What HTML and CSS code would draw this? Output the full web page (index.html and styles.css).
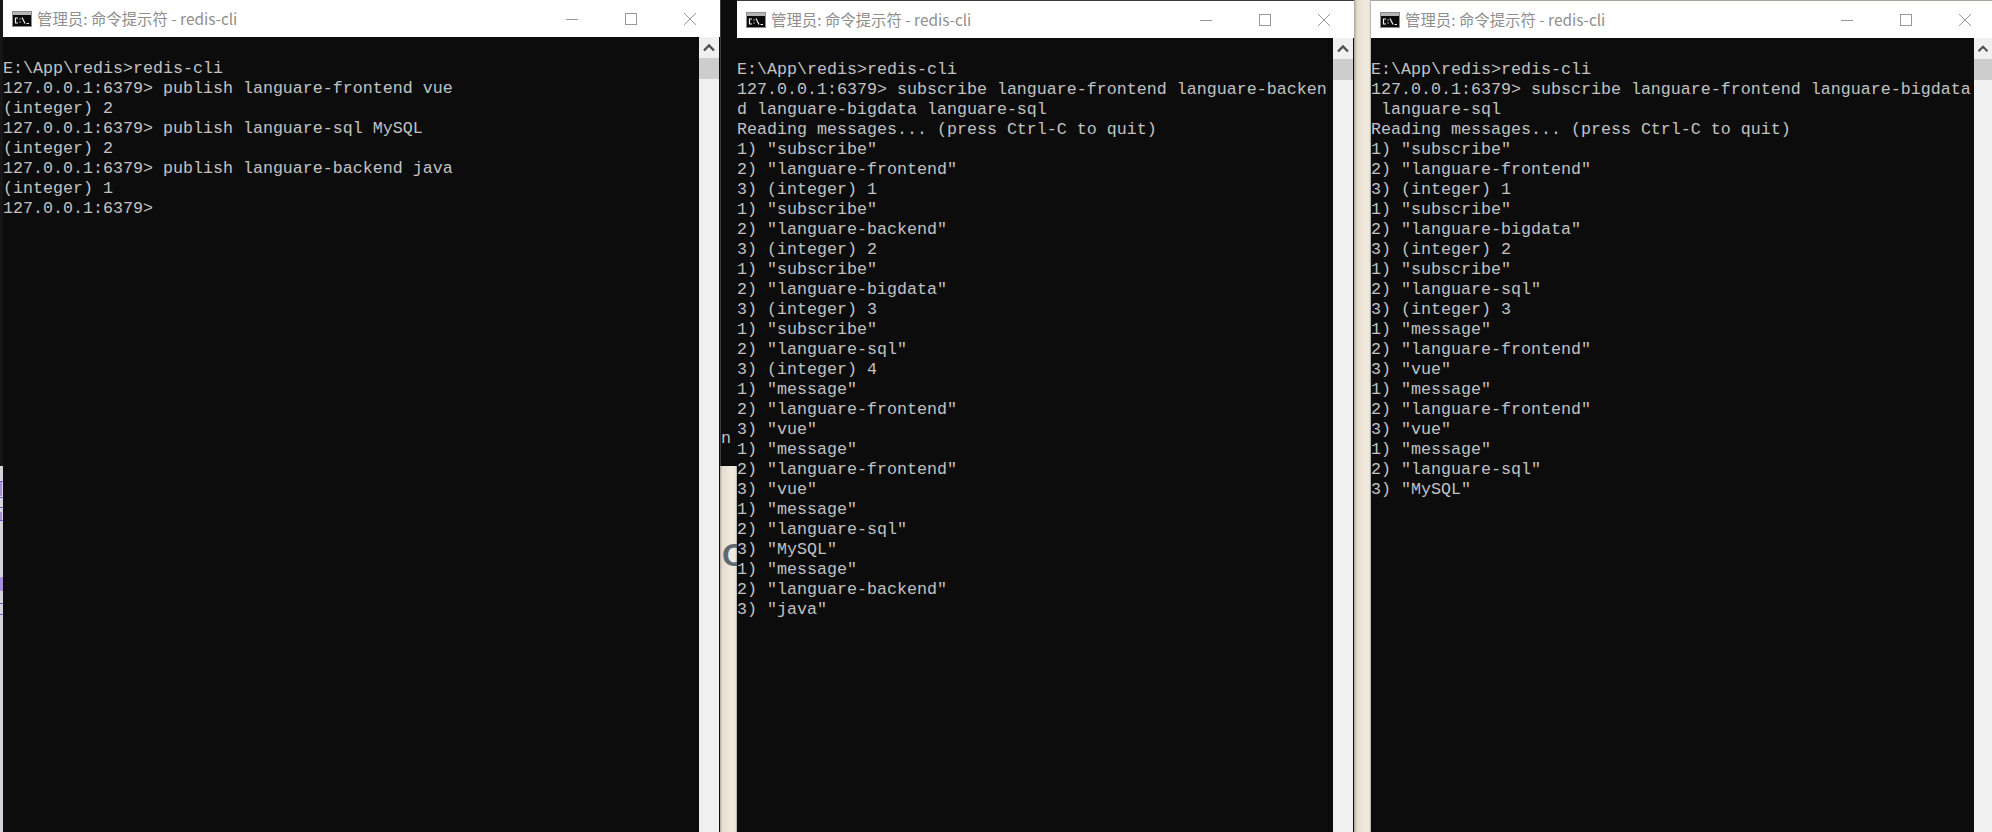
FILE: index.html
```html
<!DOCTYPE html>
<html lang="zh">
<head>
<meta charset="utf-8">
<title>redis-cli</title>
<link rel="stylesheet" href="styles.css">
</head>
<body>
<svg class="defs" width="0" height="0" aria-hidden="true">
  <symbol id="cmd" viewBox="0 0 20 16">
    <rect width="20" height="16" fill="#8c8c8c"/>
    <rect x="1" y="1" width="18" height="14" fill="#b5b5b5"/>
    <rect x="1" y="4" width="18" height="11" fill="#0a0a0a"/>
    <path d="M6 7H3.500V12H6M8 7.500V8.500M8 10.500V11.500M10 6.500L13 12.500M14.500 12.500H17" fill="none" stroke="#f0f0f0" stroke-width="1.200"/>
  </symbol>
  <symbol id="up" viewBox="0 0 20 21">
    <path d="M5 13.500L10 8.500L15 13.500" fill="none" stroke="#505050" stroke-width="2.400"/>
  </symbol>
  <symbol id="min" viewBox="0 0 12 12"><path d="M0 6.500H12" stroke="#999" fill="none"/></symbol>
  <symbol id="max" viewBox="0 0 12 12"><rect x=".5" y=".5" width="11" height="11" stroke="#999" fill="none"/></symbol>
  <symbol id="close" viewBox="0 0 12 12"><path d="M0 0L12 12M12 0L0 12" stroke="#999" fill="none"/></symbol>
</svg>
<main class="desktop">
  <div class="edge"><div class="edge-dark"></div><div class="edge-light"></div></div>

  <section class="win win-a">
    <header class="title">
      <svg class="app-icon"><use href="#cmd"/></svg>
      <span class="title-text">管理员: 命令提示符 - redis-cli</span>
      <div class="controls">
        <svg class="ctl"><use href="#min"/></svg>
        <svg class="ctl"><use href="#max"/></svg>
        <svg class="ctl"><use href="#close"/></svg>
      </div>
    </header>
    <div class="body">
<pre class="term">E:\App\redis&gt;redis-cli
127.0.0.1:6379&gt; publish languare-frontend vue
(integer) 2
127.0.0.1:6379&gt; publish languare-sql MySQL
(integer) 2
127.0.0.1:6379&gt; publish languare-backend java
(integer) 1
127.0.0.1:6379&gt;</pre>
      <div class="scroll"><div class="arrow"><svg class="arrow-icon"><use href="#up"/></svg></div><div class="thumb"></div></div>
    </div>
  </section>

  <div class="gap gap-a">
    <div class="gap-dark"><span class="gap-n">n</span></div>
    <div class="gap-light"><span class="gap-o">O</span></div>
  </div>

  <section class="win win-b">
    <header class="title">
      <svg class="app-icon"><use href="#cmd"/></svg>
      <span class="title-text">管理员: 命令提示符 - redis-cli</span>
      <div class="controls">
        <svg class="ctl"><use href="#min"/></svg>
        <svg class="ctl"><use href="#max"/></svg>
        <svg class="ctl"><use href="#close"/></svg>
      </div>
    </header>
    <div class="body">
<pre class="term">E:\App\redis&gt;redis-cli
127.0.0.1:6379&gt; subscribe languare-frontend languare-backen
d languare-bigdata languare-sql
Reading messages... (press Ctrl-C to quit)
1) "subscribe"
2) "languare-frontend"
3) (integer) 1
1) "subscribe"
2) "languare-backend"
3) (integer) 2
1) "subscribe"
2) "languare-bigdata"
3) (integer) 3
1) "subscribe"
2) "languare-sql"
3) (integer) 4
1) "message"
2) "languare-frontend"
3) "vue"
1) "message"
2) "languare-frontend"
3) "vue"
1) "message"
2) "languare-sql"
3) "MySQL"
1) "message"
2) "languare-backend"
3) "java"</pre>
      <div class="scroll"><div class="arrow"><svg class="arrow-icon"><use href="#up"/></svg></div><div class="thumb"></div></div>
    </div>
  </section>

  <div class="gap gap-b"></div>

  <section class="win win-c">
    <header class="title">
      <svg class="app-icon"><use href="#cmd"/></svg>
      <span class="title-text">管理员: 命令提示符 - redis-cli</span>
      <div class="controls">
        <svg class="ctl"><use href="#min"/></svg>
        <svg class="ctl"><use href="#max"/></svg>
        <svg class="ctl"><use href="#close"/></svg>
      </div>
    </header>
    <div class="body">
<pre class="term">E:\App\redis&gt;redis-cli
127.0.0.1:6379&gt; subscribe languare-frontend languare-bigdata
 languare-sql
Reading messages... (press Ctrl-C to quit)
1) "subscribe"
2) "languare-frontend"
3) (integer) 1
1) "subscribe"
2) "languare-bigdata"
3) (integer) 2
1) "subscribe"
2) "languare-sql"
3) (integer) 3
1) "message"
2) "languare-frontend"
3) "vue"
1) "message"
2) "languare-frontend"
3) "vue"
1) "message"
2) "languare-sql"
3) "MySQL"</pre>
      <div class="scroll"><div class="arrow"><svg class="arrow-icon"><use href="#up"/></svg></div><div class="thumb"></div></div>
    </div>
  </section>
</main>
</body>
</html>
```
FILE: styles.css
```css
* { box-sizing: border-box; }
html, body { margin: 0; height: 100%; overflow: hidden; background: #0c0c0c; }
.defs { display: block; height: 0; }
.desktop { display: flex; width: 1992px; height: 832px; overflow: hidden; background: #0c0c0c; }

.edge { width: 3px; display: flex; flex-direction: column; flex: none; }
.edge-dark { height: 466px; background: #161616; }
.edge-light {
  flex: 1;
  background:
    linear-gradient(#7a55d8 0 0) 0 15px / 3px 1px no-repeat,
    linear-gradient(#a48fdc 0 0) 0 16px / 2px 14px no-repeat,
    linear-gradient(#7a55d8 0 0) 0 31px / 3px 1px no-repeat,
    linear-gradient(#7a55d8 0 0) 0 41px / 3px 1px no-repeat,
    linear-gradient(#a48fdc 0 0) 0 46px / 2px 8px no-repeat,
    linear-gradient(#7a55d8 0 0) 0 54px / 3px 1px no-repeat,
    linear-gradient(#a48fdc 0 0) 0 111px / 3px 14px no-repeat,
    linear-gradient(#7a55d8 0 0) 0 137px / 3px 1px no-repeat,
    linear-gradient(#7a55d8 0 0) 0 148px / 3px 1px no-repeat,
    #d6d2da;
}

.win { display: flex; flex-direction: column; flex: none; height: 100%; }
.win-a { width: 717px; }
.win-b { width: 617px; border-top: 1px solid #3a3a3a; }
.win-c { width: 621px; border-top: 1px solid #a9a49c; }

.title {
  display: flex; align-items: center; flex: none;
  height: 37px; background: #fff; padding-left: 9px;
}
.app-icon { width: 20px; height: 16px; flex: none; }
.title-text {
  margin: 0 0 2px 5px;
  font: 15.4px/20px "Noto Sans CJK SC", "Noto Sans", sans-serif;
  color: #8f8f8f;
  white-space: pre;
}
.controls { margin-left: auto; display: flex; gap: 47px; padding-right: 24px; }
.win-c .controls { padding-right: 21px; }
.ctl { width: 12px; height: 12px; display: block; }

.body { flex: 1; display: flex; min-height: 0; }
.term {
  flex: 1; margin: 0; padding: 22px 0 0;
  background: #0c0c0c; color: #c2c2c2;
  font: 16.667px/20px "Liberation Mono", monospace;
  white-space: pre; overflow: hidden;
}
.scroll { width: 20px; background: #f0f0f0; flex: none; margin-right: 1px; }
.win-c .scroll { width: 18px; margin-right: 0; }
.arrow { height: 21px; }
.arrow-icon { width: 100%; height: 21px; display: block; }
.thumb { height: 21px; background: #cdcdcd; }

.gap { width: 17px; flex: none; display: flex; flex-direction: column; overflow: hidden; }
.gap-dark { height: 466px; background: #0c0c0c; border-left: 1px solid #3c3c3c; padding-top: 429px; }
.gap-n { display: block; font: 16.667px/20px "Liberation Mono", monospace; color: #c2c2c2; }
.gap-light {
  flex: 1; padding-top: 71px; padding-left: 2px;
  background: linear-gradient(90deg, #a8a39a 0, #e4dccd 2px, #f0e9dd 60%, #efe8dc 90%, #a8a39a 100%);
}
.gap-o { display: block; font: 700 32px/36px "Liberation Sans", sans-serif; color: #5f6770; }
.gap-b {
  background: linear-gradient(90deg, #a8a39a 0, #e4dccd 3px, #f0e9dd 60%, #efe8dc 90%, #a8a39a 100%);
}
```
